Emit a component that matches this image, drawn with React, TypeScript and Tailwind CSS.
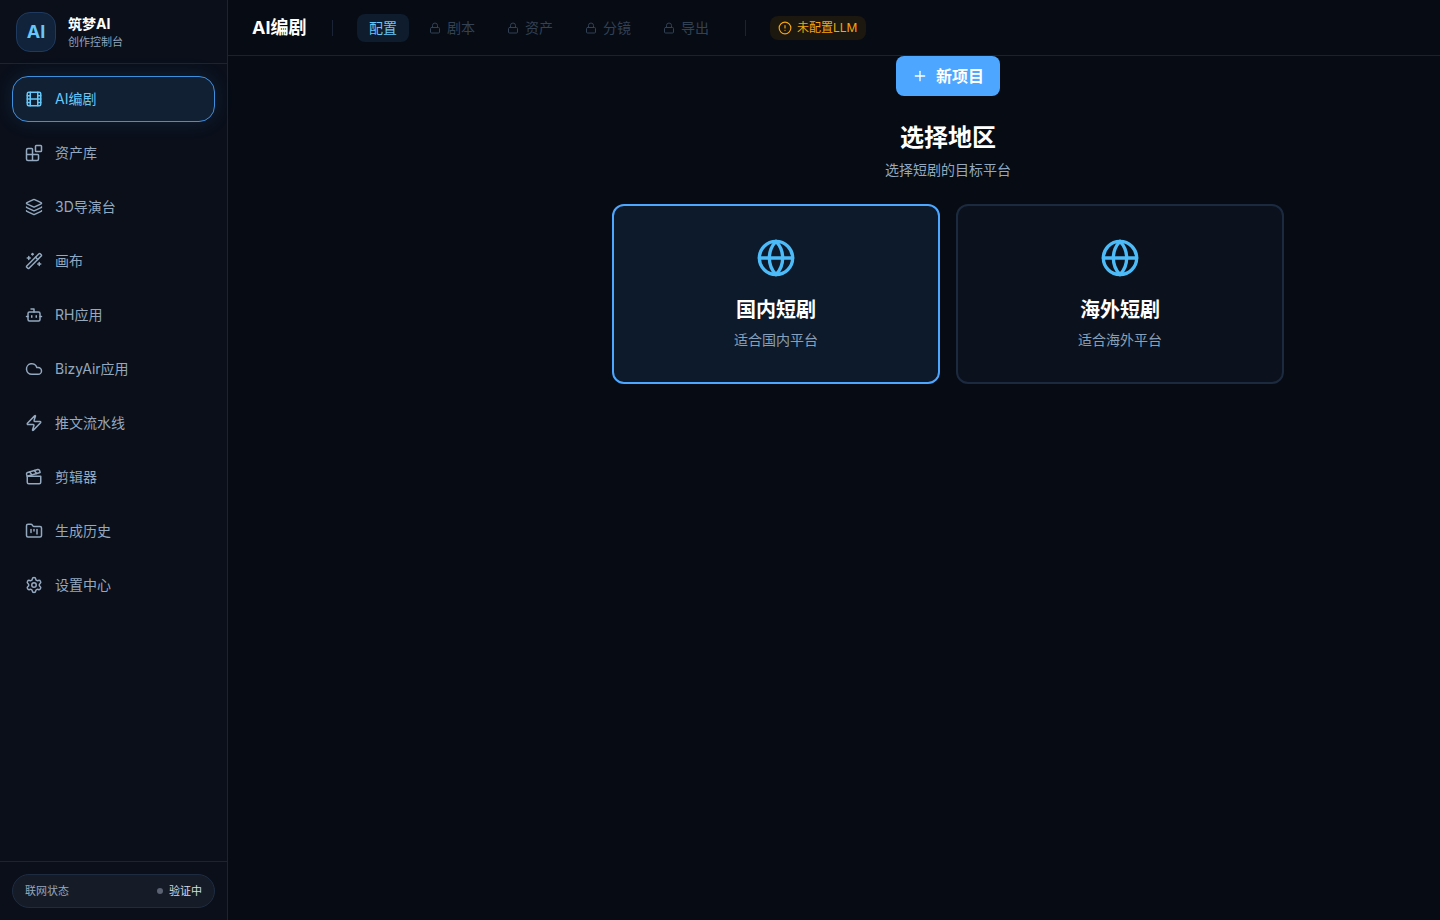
import { AlertCircle, Blocks, Bot, Clapperboard, Cloud, Film, FolderKanban, Globe, Layers, Lock, Plus, Settings, Wand2, Zap } from 'lucide-react'

const font = "font-['Inter','Noto_Sans_CJK_SC',sans-serif]"

const navItems = [
  { label: 'AI编剧', icon: Film, active: true },
  { label: '资产库', icon: Blocks },
  { label: '3D导演台', icon: Layers },
  { label: '画布', icon: Wand2 },
  { label: 'RH应用', icon: Bot },
  { label: 'BizyAir应用', icon: Cloud },
  { label: '推文流水线', icon: Zap },
  { label: '剪辑器', icon: Clapperboard },
  { label: '生成历史', icon: FolderKanban },
  { label: '设置中心', icon: Settings },
]

const steps = ['剧本', '资产', '分镜', '导出']

const regions = [
  { title: '国内短剧', desc: '适合国内平台', active: true },
  { title: '海外短剧', desc: '适合海外平台', active: false },
]

function Sidebar() {
  return (
    <aside className="flex h-[920px] w-[228px] shrink-0 flex-col border-r border-[#1a2435] bg-[#0a0f1a]">
      <div className="flex h-[64px] items-center gap-3 border-b border-[#1a2435] px-4">
        <div className="flex h-10 w-10 items-center justify-center rounded-[14px] border border-[#1e3a5f] bg-[#10233a] text-lg font-bold text-[#66c7f8]">AI</div>
        <div className="flex flex-col">
          <span className="text-sm leading-[20px] font-bold text-white">筑梦AI</span>
          <span className="text-[11px] leading-[16px] text-[#8fa3ba]">创作控制台</span>
        </div>
      </div>
      <nav className="flex flex-1 flex-col gap-2 px-3 pt-3">
        {navItems.map(item => (
          <div
            key={item.label}
            className={
              item.active
                ? 'flex h-[46px] items-center gap-3 rounded-[16px] border border-[#3f8fdf] bg-[#122033] px-3 text-sm text-[#66c7f8] shadow-[0_0_20px_rgba(77,166,255,0.12)]'
                : 'flex h-[46px] items-center gap-3 rounded-[16px] border border-transparent px-3 text-sm text-[#94a8bf]'
            }
          >
            <item.icon size={18} strokeWidth={2} className="shrink-0" />
            <span>{item.label}</span>
          </div>
        ))}
      </nav>
      <div className="border-t border-[#1a2435] px-3 pt-3 pb-3">
        <div className="flex h-[34px] items-center justify-between rounded-[17px] border border-[#1e2c42] bg-[#151b27] px-3 text-[11px]">
          <span className="text-[#94a8bf]">联网状态</span>
          <span className="flex items-center gap-[6px] text-[#d5dce6]">
            <span className="h-[6px] w-[6px] rounded-full bg-[#5b6272]" />
            验证中
          </span>
        </div>
      </div>
    </aside>
  )
}

function Header() {
  return (
    <header className="flex h-[56px] shrink-0 items-center border-b border-[#182230] px-6">
      <h1 className="w-[56px] text-lg font-bold text-white">AI编剧</h1>
      <div className="mx-6 h-4 w-px bg-[#1a2435]" />
      <div className="flex items-center gap-2">
        <div className="flex h-7 items-center rounded-lg bg-[#0e1c2e] px-3 text-sm text-[#66c7f8]">配置</div>
        {steps.map(step => (
          <div key={step} className="flex h-7 items-center gap-[6px] px-3 text-sm text-[#334155]">
            <Lock size={12} strokeWidth={2} />
            <span>{step}</span>
          </div>
        ))}
      </div>
      <div className="mx-6 h-4 w-px bg-[#1a2435]" />
      <div className="flex h-6 items-center gap-[5px] rounded-lg bg-[#1c170f] pr-[9px] pl-2 text-xs text-[#f5a50f]">
        <AlertCircle size={14} strokeWidth={2} />
        <span>未配置LLM</span>
      </div>
    </header>
  )
}

export default function App() {
  return (
    <div className={`${font} flex h-[920px] w-[1440px] overflow-hidden bg-[#060b14]`}>
      <Sidebar />
      <div className="flex min-w-0 flex-1 flex-col">
        <Header />
        <div className="flex flex-1">
          <div className="w-[228px] shrink-0" />
          <main className="flex flex-1 flex-col items-center">
            <button className="flex h-10 items-center gap-2 rounded-lg bg-[#4da6ff] px-4 text-base font-bold text-white">
              <Plus size={16} strokeWidth={2} />
              新项目
            </button>
            <h2 className="mt-[25px] text-2xl leading-[34px] font-bold text-white">选择地区</h2>
            <p className="mt-[5px] text-sm leading-[20px] text-[#94a8bf]">选择短剧的目标平台</p>
            <div className="mt-6 grid w-[672px] grid-cols-2 gap-4">
              {regions.map(region => (
                <div
                  key={region.title}
                  className={
                    region.active
                      ? 'flex h-[180px] flex-col items-center rounded-xl border-2 border-[#4da6ff] bg-[#0d1a2b] pt-[32px]'
                      : 'flex h-[180px] flex-col items-center rounded-xl border-2 border-[#1c2a3f] bg-[#0b121d] pt-[32px]'
                  }
                >
                  <Globe size={40} strokeWidth={2} className="text-[#4dbbf8]" />
                  <h3 className="mt-[18px] text-xl leading-[28px] font-bold text-white">{region.title}</h3>
                  <p className="mt-[6px] text-sm leading-[20px] text-[#86a0bd]">{region.desc}</p>
                </div>
              ))}
            </div>
          </main>
        </div>
      </div>
    </div>
  )
}
